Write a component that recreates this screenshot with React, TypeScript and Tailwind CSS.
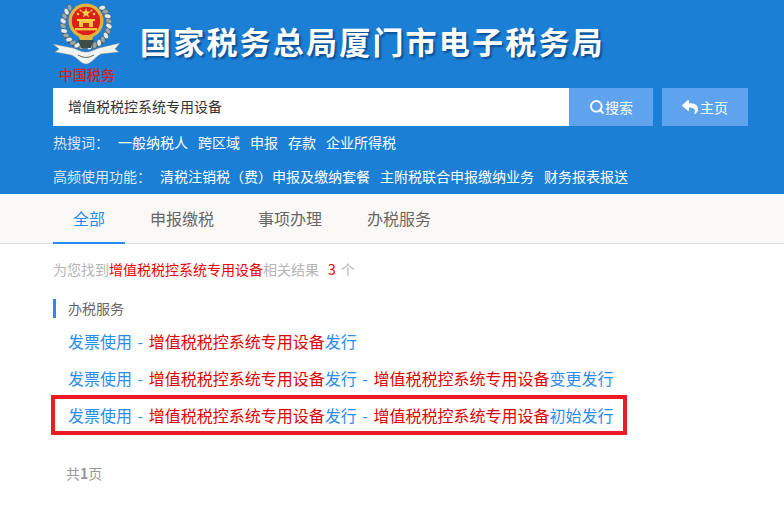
import React from "react";
import { Search } from "lucide-react";
import { FaReply } from "react-icons/fa";

const KW = "增值税税控系统专用设备";
const font = { fontFamily: '"Noto Sans CJK SC", "Noto Sans", sans-serif' };

function leaves(cx: number, cy: number, r: number, from: number, to: number, n: number) {
  return Array.from({ length: n }, (_, i) => {
    const a = ((from + ((to - from) * i) / (n - 1)) * Math.PI) / 180;
    return { x: cx + r * Math.cos(a), y: cy + r * Math.sin(a), rot: (a * 180) / Math.PI + 90 };
  });
}

function Emblem() {
  const left = leaves(33, 24, 23, 100, 225, 11);
  const right = leaves(33, 24, 23, 80, -45, 11);
  return (
    <svg width="68" height="86" viewBox="0 0 68 86" className="shrink-0">
      <path d="M25 47 C14 45 8 34 11 20" fill="none" stroke="#3f4d49" strokeWidth="1.5" />
      <path d="M41 47 C52 45 58 34 55 20" fill="none" stroke="#3f4d49" strokeWidth="1.5" />
      {[...left, ...right].map((l, i) => (
        <ellipse key={i} cx={l.x} cy={l.y} rx="2.3" ry="3.4" transform={`rotate(${l.rot + 35} ${l.x} ${l.y})`} fill={i % 2 ? "#e7ebec" : "#9aa5a8"} stroke="#34423f" strokeWidth="0.4" />
      ))}
      <circle cx="33" cy="21" r="17.5" fill="#e3b23a" />
      <circle cx="33" cy="21" r="14.2" fill="#dc1f1c" />
      <polygon points="33,8 34.2,11.6 38,11.6 35,13.8 36.1,17.4 33,15.2 29.9,17.4 31,13.8 28,11.6 31.8,11.6" fill="#f6d54a" />
      <circle cx="25" cy="14" r="1.3" fill="#f6d54a" />
      <circle cx="41" cy="14" r="1.3" fill="#f6d54a" />
      <circle cx="27.5" cy="10.5" r="1" fill="#f6d54a" />
      <circle cx="38.5" cy="10.5" r="1" fill="#f6d54a" />
      <rect x="24" y="19" width="18" height="2" fill="#f6d54a" />
      <rect x="26" y="21" width="14" height="6" fill="#f0c63f" />
      <rect x="30" y="23" width="6" height="4" fill="#c8281e" />
      <rect x="22" y="28" width="22" height="2.4" fill="#f0c63f" />
      <path d="M25 35 L41 35 L39 40 L27 40 Z" fill="#e3b23a" />
      <path d="M25 40 L41 40 L38 48 L28 48 Z" fill="#3f4d49" />
      <path d="M0 44 L20 48 C26 50 28 52 33 52 C38 52 40 50 46 48 L67 43 L62 49 L66 52 L48 54 C42 57 38 64 33 64 C28 64 24 57 18 55 L2 52 L6 49 Z" fill="#f2f4f2" stroke="#7d8a88" strokeWidth="0.5" />
      <path d="M25 55 Q33 60 41 55" fill="none" stroke="#5b6966" strokeWidth="1" />
      <text x="34" y="80" textAnchor="middle" fontSize="14" fontWeight="500" fill="#d9201c" style={font}>中国税务</text>
    </svg>
  );
}

function Kw() {
  return <span className="text-[#e00000]">{KW}</span>;
}

function Dash() {
  return <span className="mx-[2px]"> - </span>;
}

function ResultLink({ tails }: { tails: string[] }) {
  return (
    <a className="block text-[16px] leading-[24px] text-[#2b8cf0] whitespace-nowrap">
      发票使用
      <Dash />
      <Kw />
      {tails[0]}
      {tails[1] !== undefined && (
        <>
          <Dash />
          <Kw />
          {tails[1]}
        </>
      )}
    </a>
  );
}

export default function App() {
  return (
    <div className="w-[784px] h-[520px] overflow-hidden bg-white" style={font}>
      <header className="h-[194px] bg-[#1c7fd6] pl-[53px] pr-[36px] flex flex-col">
        <div className="h-[88px] flex items-start gap-[19px]">
          <Emblem />
          <h1 className="mt-[20px] text-[31px] leading-[42px] font-bold tracking-[2.2px] text-white whitespace-nowrap [text-shadow:2px_2px_2px_rgba(0,40,90,0.55)]">
            国家税务总局厦门市电子税务局
          </h1>
        </div>
        <div className="flex h-[38px]">
          <div className="w-[516px] shrink-0 bg-white pl-[15px] text-[14px] leading-[37px] text-[#333]">{KW}</div>
          <button className="w-[84px] shrink-0 bg-[#5fa3ee] text-white text-[14px] flex items-center justify-center">
            <Search size={16} strokeWidth={2.8} />
            <span>搜索</span>
          </button>
          <button className="ml-[9px] w-[86px] shrink-0 bg-[#5fa3ee] text-white text-[14px] flex items-center justify-center gap-[2px]">
            <FaReply size={16} />
            <span>主页</span>
          </button>
        </div>
        <div className="mt-[6px] h-[20px] flex items-center text-[14px] text-[#dce9f8] whitespace-nowrap">
          <span className="w-[65px]">热搜词：</span>
          <div className="flex gap-[10px] text-white">
            <span>一般纳税人</span>
            <span>跨区域</span>
            <span>申报</span>
            <span>存款</span>
            <span>企业所得税</span>
          </div>
        </div>
        <div className="mt-[14px] h-[20px] flex items-center text-[14px] text-[#dce9f8] whitespace-nowrap">
          <span className="w-[107px]">高频使用功能：</span>
          <div className="flex gap-[10px] text-white">
            <span>清税注销税（费）申报及缴纳套餐</span>
            <span>主附税联合申报缴纳业务</span>
            <span>财务报表报送</span>
          </div>
        </div>
      </header>
      <nav className="h-[50px] bg-[#faf9f8] border-b border-[#dcdcdc] px-[53px] flex gap-[4px] text-[16px] text-[#666]">
        <a className="mr-[1px] px-[20px] leading-[49px] h-[50px] border-b-2 border-[#2b8cf0] text-[#2b8cf0]">全部</a>
        <a className="px-[20px] leading-[49px]">申报缴税</a>
        <a className="px-[20px] leading-[49px]">事项办理</a>
        <a className="px-[20px] leading-[49px] ml-[1px]">办税服务</a>
      </nav>
      <main className="px-[53px]">
        <p className="mt-[15px] text-[14px] leading-[20px] text-[#b5b5b5] whitespace-nowrap">
          为您找到<span className="text-[#f00000]">{KW}</span>相关结果
          <span className="text-[#f00000] ml-[9px] mr-[5px]">3</span>个
        </p>
        <h2 className="mt-[20px] border-l-[3px] border-[#2b8cf0] pl-[12px] text-[14px] leading-[19px] text-[#666]">办税服务</h2>
        <div className="mt-[11px] pl-[15px] flex flex-col gap-[13px]">
          <ResultLink tails={["发行"]} />
          <ResultLink tails={["发行", "变更发行"]} />
          <div className="relative">
            <ResultLink tails={["发行", "初始发行"]} />
            <div className="absolute left-[-17px] top-[-8px] w-[576px] h-[40px] border-[4px] border-[#ed1c24]" />
          </div>
        </div>
        <p className="mt-[36px] pl-[13px] text-[14px] leading-[20px] text-[#999]">
          共<b className="font-bold">1</b>页
        </p>
      </main>
    </div>
  );
}
